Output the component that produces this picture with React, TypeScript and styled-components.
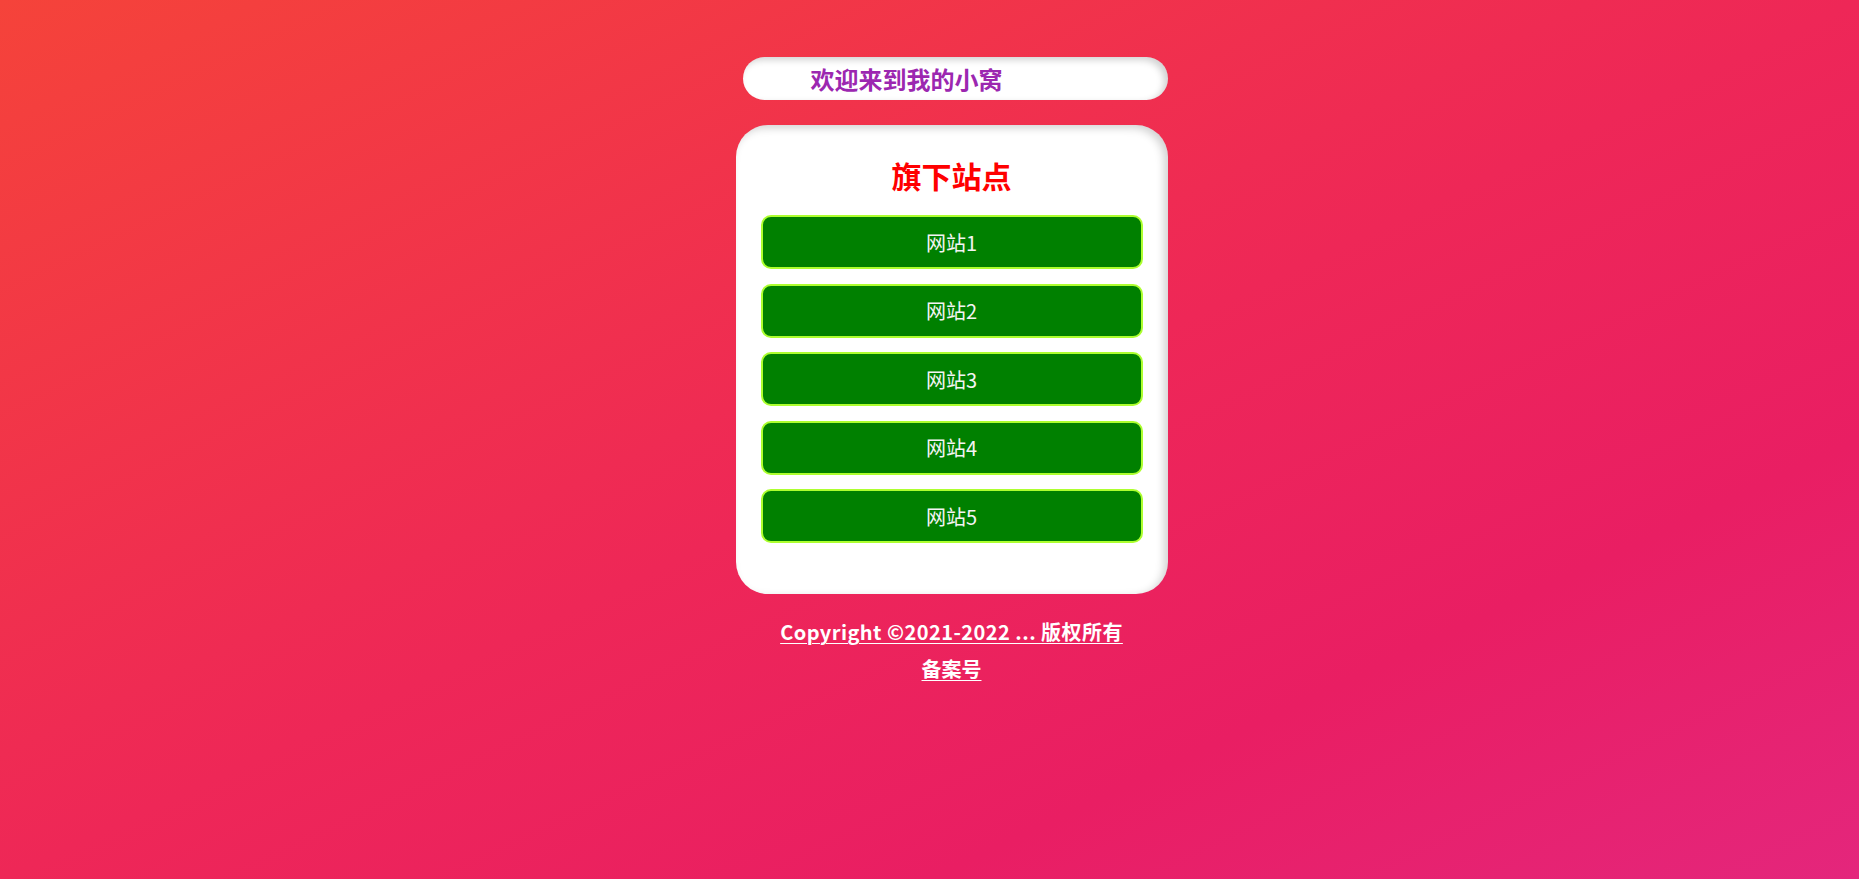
import React from "react";
import styled, { createGlobalStyle } from "styled-components";

const sites = ["网站1", "网站2", "网站3", "网站4", "网站5"];

const GlobalStyle = createGlobalStyle`
  html, body {
    margin: 0;
    padding: 0;
    height: 100%;
  }
  body {
    font-family: "Noto Sans CJK SC", "Noto Sans", sans-serif;
    background: linear-gradient(to bottom right, #f5433a 0%, #ee2757 50%, #e91e63 75%, #e4267c 100%);
    background-attachment: fixed;
    min-height: 879px;
  }
`;

const Page = styled.div`
  display: flex;
  flex-direction: column;
  align-items: center;
  padding: 57px 0 0 44px;
`;

const Welcome = styled.div`
  width: 425px;
  height: 43px;
  box-sizing: border-box;
  margin-right: -7px;
  padding-left: 68px;
  background: #fff;
  border-radius: 22px;
  box-shadow: inset -4px 3px 7px rgba(0, 0, 0, 0.18);
  display: flex;
  align-items: center;
  color: #9c27b0;
  font-size: 24px;
  font-weight: bold;
  white-space: nowrap;
  overflow: hidden;
`;

const Card = styled.div`
  width: 432px;
  box-sizing: border-box;
  margin-top: 25px;
  padding: 30px 25px 51px;
  background: #fff;
  border-radius: 32px;
  box-shadow: inset -4px 3px 8px rgba(0, 0, 0, 0.18);
  display: flex;
  flex-direction: column;
  gap: 14.5px;
`;

const Title = styled.h2`
  margin: 0 0 5.5px;
  text-align: center;
  color: #ff0000;
  font-size: 30px;
  line-height: 40px;
  font-weight: bold;
`;

const SiteLink = styled.a`
  display: flex;
  align-items: center;
  justify-content: center;
  height: 54px;
  box-sizing: border-box;
  background: #008000;
  border: 2px solid #adff2f;
  border-radius: 10px;
  color: #f4f4f4;
  font-size: 20px;
  text-decoration: none;
  cursor: pointer;
`;

const Footer = styled.footer`
  margin-top: 19px;
  display: flex;
  flex-direction: column;
  align-items: center;
`;

const FooterLink = styled.a<{ $spacing?: number }>`
  color: #fff;
  font-size: 20px;
  font-weight: bold;
  line-height: 37px;
  letter-spacing: ${p => p.$spacing ?? 0}px;
  text-decoration: underline;
  text-underline-offset: 3px;
  text-decoration-thickness: 1px;
`;

export default function App() {
  return (
    <>
      <GlobalStyle />
      <Page>
        <Welcome>欢迎来到我的小窝</Welcome>
        <Card>
          <Title>旗下站点</Title>
          {sites.map(name => (
            <SiteLink key={name}>{name}</SiteLink>
          ))}
        </Card>
        <Footer>
          <FooterLink $spacing={0.45}>Copyright ©2021-2022 ... 版权所有</FooterLink>
          <FooterLink>备案号</FooterLink>
        </Footer>
      </Page>
    </>
  );
}
